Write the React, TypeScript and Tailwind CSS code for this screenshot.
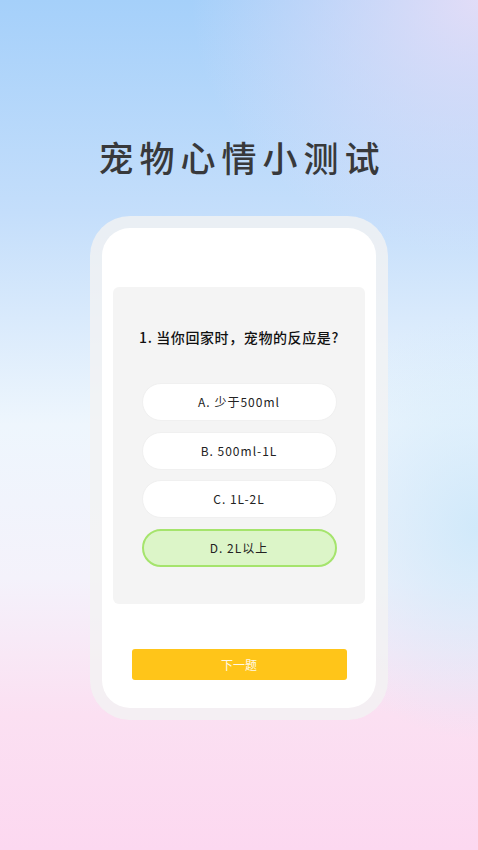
import { useState } from "react";

const OPTIONS = ["A. 少于500ml", "B. 500ml-1L", "C. 1L-2L", "D. 2L以上"];

export default function App() {
  const [picked, setPicked] = useState(3);

  return (
    <div className="w-[478px] h-[850px] overflow-hidden flex flex-col items-center font-['Noto_Sans_CJK_SC',sans-serif] bg-[radial-gradient(ellipse_60%_30%_at_100%_0%,rgba(232,222,247,0.9)_0%,rgba(232,222,247,0)_100%),radial-gradient(ellipse_40%_25%_at_100%_62%,rgba(205,232,250,0.9)_0%,rgba(205,232,250,0)_100%),linear-gradient(180deg,#a5d0fa_0%,#c4defb_25%,#eef6fd_50%,#f4f2fb_68%,#fbe0f2_84%,#fcd8f0_100%)]">
      <h1 className="mt-[133px] text-[35px] leading-[48px] font-medium tracking-[6px] text-[#38393b] pl-[6px]">
        宠物心情小测试
      </h1>

      <div className="mt-[35px] w-[298px] h-[504px] rounded-[40px] bg-[#f2f2f2]/80 p-[12px]">
        <div className="h-full rounded-[28px] bg-white flex flex-col items-center pt-[59px]">
          <div className="w-[252px] h-[317px] rounded-md bg-[#f4f4f4] flex flex-col items-center">
            <p className="mt-[40px] text-[14px] leading-[20px] font-medium tracking-[0.6px] text-[#111]">
              1. 当你回家时，宠物的反应是?
            </p>
            <div className="mt-[36px] flex flex-col gap-[10.5px]">
              {OPTIONS.map((o, i) => (
                <button
                  key={o}
                  onClick={() => setPicked(i)}
                  className={`w-[195px] h-[38px] rounded-full text-[12px] tracking-[1px] text-[#222] ${
                    picked === i
                      ? "bg-[#dcf5c8] border-2 border-[#a5e46c]"
                      : "bg-white border border-[#f0f0f0]"
                  }`}
                >
                  {o}
                </button>
              ))}
            </div>
          </div>
          <button className="mt-[45px] w-[215px] h-[31px] rounded-[3px] bg-[#ffc519] text-white/90 text-[12px]">
            下一题
          </button>
        </div>
      </div>
    </div>
  );
}
